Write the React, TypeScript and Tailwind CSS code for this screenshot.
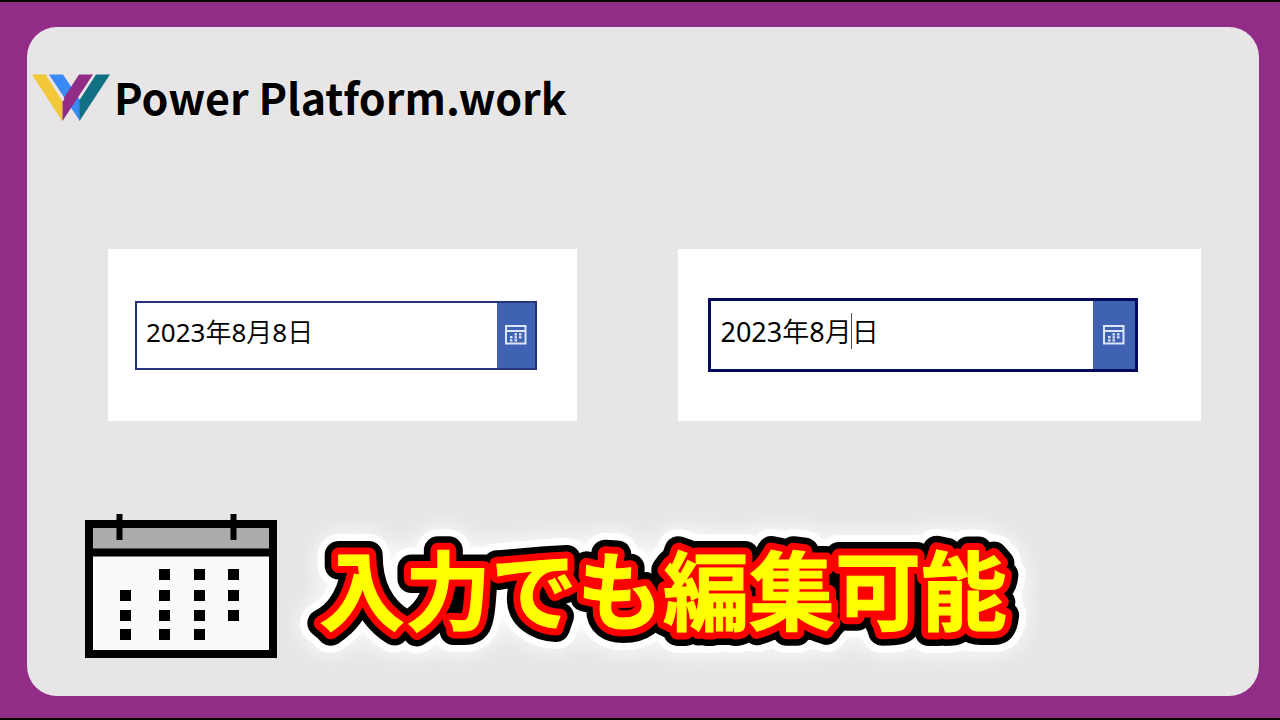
import { FC } from "react";
import clsx from "clsx";

const dateFields = [
  {
    id: "date-full",
    label: "日付",
    value: "2023年8月8日",
    active: false,
  },
  {
    id: "date-editing",
    label: "日付(編集中)",
    value: "2023年8月日",
    active: true,
  },
];

// [x, y] of every day square on the big calendar
const days = [
  [74, 55], [109, 55], [143, 55],
  [35, 76], [74, 76], [109, 76], [143, 76],
  [35, 96], [74, 96], [109, 96], [143, 96],
  [35, 115], [74, 115], [109, 115],
];

// outlines of the caption, widest first
const outlines = [
  { color: "#ffffff", width: 42 },
  { color: "#000000", width: 28 },
  { color: "#ff0000", width: 15 },
];

const Logo: FC = () => (
  <svg viewBox="0 0 78 48" className="h-12 w-[78px] shrink-0" aria-hidden="true">
    <path d="M0 0.5H14.5L30.5 26V47.5Z" fill="#f2c838" />
    <path d="M17 0.5H31L48 26V47L40.5 36Z" fill="#3a8af5" />
    <path d="M47 0.5H61L30.5 47V26Z" fill="#922d87" />
    <path d="M16 0.5L32.5 25.5L30.5 27.5L14.5 2Z" fill="#e7e5e6" />
    <path d="M64 0.5H78L47.5 47V26Z" fill="#117083" />
  </svg>
);

const SmallCalendar: FC = () => (
  <svg viewBox="0 0 22 20" className="h-5 w-[22px]" aria-hidden="true">
    <path d="M1 1H20.5V18.5H1ZM1 6H20.5" fill="none" stroke="#dbe6fb" strokeWidth="2" />
    <g fill="#dbe6fb">
      <path d="M5 11h2.500v2.200H5zM5 14.300h2.500v2.200H5z" />
      <path d="M9.500 8.300h2.500v2.200h-2.500zM9.500 11.300h2.500v2.200h-2.500zM9.500 14.300h2.500v2.200h-2.500z" />
      <path d="M14 8.300h2.500v2.200h-2.500zM14 11.300h2.500v2.200h-2.500z" />
    </g>
  </svg>
);

const BigCalendar: FC = () => (
  <svg viewBox="0 0 192 144" className="h-36 w-48 shrink-0" aria-hidden="true">
    <rect x="4" y="10" width="184" height="130" fill="#fafafa" />
    <rect x="4" y="10" width="184" height="29" fill="#ababab" />
    <path d="M4 10H188V140H4ZM4 38.5H188" fill="none" stroke="#000" strokeWidth="8" />
    <path d="M34.5 0V26M148.5 0V26" stroke="#000" strokeWidth="6" />
    {days.map(([x, y]) => (
      <rect key={`${x}-${y}`} x={x} y={y} width="11" height="11" />
    ))}
  </svg>
);

const Headline: FC<{ text: string }> = ({ text }) => (
  <h1 className="font-['Noto_Sans_CJK_JP',sans-serif] text-[86px] font-bold">
    <svg viewBox="0 0 750 150" className="h-[150px] w-[750px] overflow-visible">
      {outlines.map((outline, index) => (
        <text
          key={outline.color}
          x="24"
          y="113"
          aria-hidden="true"
          fill={outline.color}
          stroke={outline.color}
          strokeWidth={outline.width}
          strokeLinejoin="round"
          className={index === 0 ? "drop-shadow-[0_0_12px_white]" : undefined}
        >
          {text}
        </text>
      ))}
      <text x="24" y="113" fill="#ffff00" stroke="#ffff00">
        {text}
      </text>
    </svg>
  </h1>
);

const App: FC = () => {
  return (
    <div className="flex min-h-screen flex-col border-y-2 border-black bg-[#922d87] pt-[25px] pr-[21px] pb-[22px] pl-[27px]">
      <main className="flex flex-1 flex-col rounded-[30px] bg-[#e7e5e6] pb-[35px]">
        {/* Brand */}
        <header className="flex items-center gap-1 pt-[41px] pl-[5px]">
          <Logo />
          <span className="pb-1 font-['Noto_Sans_CJK_JP',sans-serif] text-[43px] leading-[56px] font-bold text-black [text-shadow:0_0_2px_white]">
            Power Platform.work
          </span>
        </header>

        {/* Date pickers */}
        <section className="mt-[121px] grid grid-cols-[469fr_522fr] gap-[101px] pr-[58px] pl-[81px]">
          {dateFields.map((field) => (
            <div
              key={field.id}
              className={clsx(
                "flex h-[172px] min-w-0 items-center bg-white",
                field.active ? "pr-[63px] pl-[30px]" : "pr-10 pl-[27px]"
              )}
            >
              <div
                className={clsx(
                  "relative flex min-w-0 flex-1 bg-white",
                  field.active
                    ? "h-[74px] border-3 border-[#050a5c]"
                    : "h-[69px] border-2 border-[#27357f]"
                )}
              >
                <input
                  id={field.id}
                  type="text"
                  aria-label={field.label}
                  defaultValue={field.value}
                  className={clsx(
                    "w-full min-w-0 flex-1 pb-1.5 pl-[9px] font-['Noto_Sans','Noto_Sans_CJK_JP_DemiLight','Noto_Sans_CJK_JP',sans-serif] text-black outline-none",
                    field.active ? "text-[27px]" : "text-[26px]"
                  )}
                />
                {field.active && (
                  <span className="absolute top-3 left-[140px] h-9 w-px bg-gray-600" aria-hidden="true" />
                )}
                <button
                  type="button"
                  aria-label="カレンダーを開く"
                  className={clsx(
                    "flex shrink-0 items-center justify-center bg-[#4062b3]",
                    field.active ? "w-[42px]" : "w-[38px]"
                  )}
                >
                  <SmallCalendar />
                </button>
              </div>
            </div>
          ))}
        </section>

        {/* Caption */}
        <section className="mt-auto flex items-center gap-[18px] pl-[58px]">
          <BigCalendar />
          <Headline text="入力でも編集可能" />
        </section>
      </main>
    </div>
  );
};

export default App;
